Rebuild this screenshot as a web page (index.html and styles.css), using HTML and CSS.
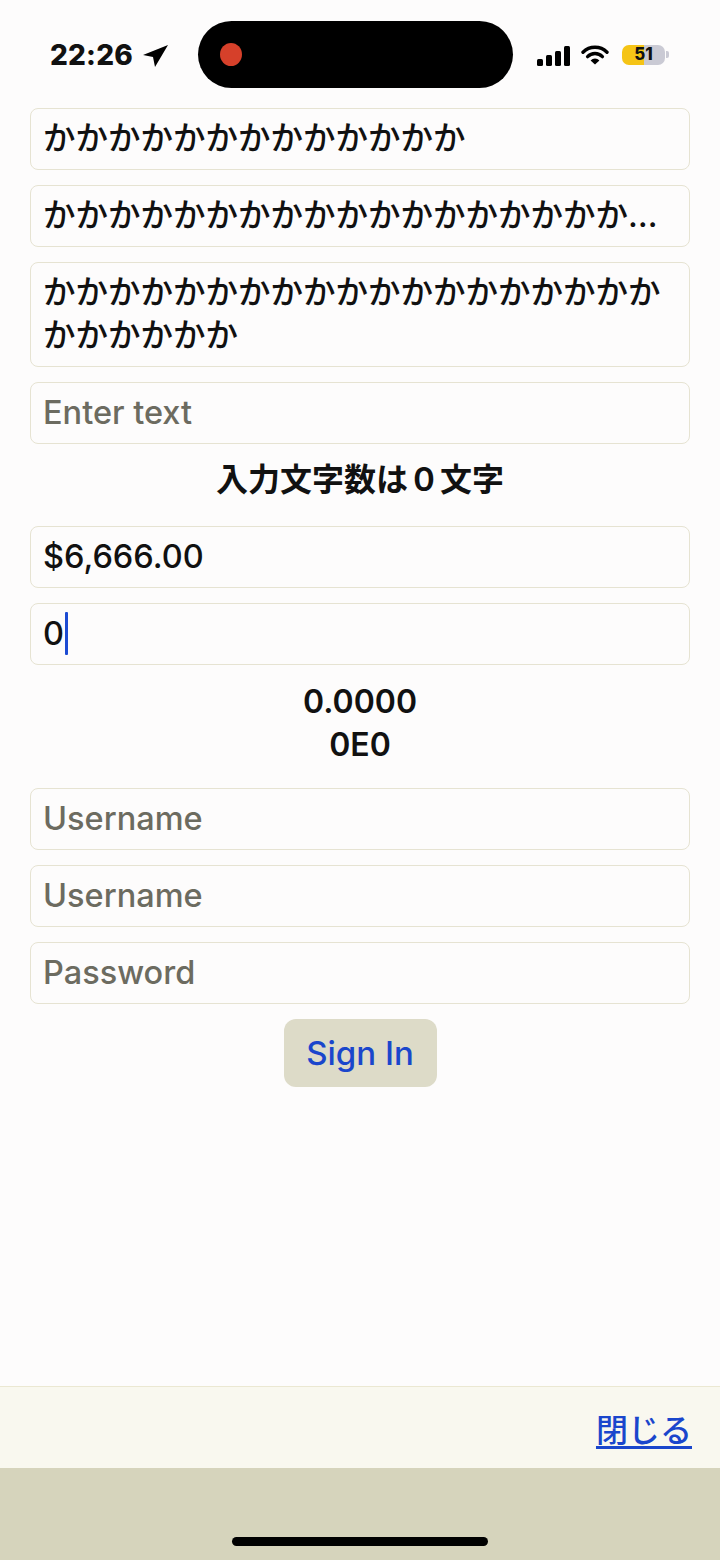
FILE: index.html
```html
<!DOCTYPE html>
<html lang="ja">
<head>
<meta charset="utf-8">
<title>Form</title>
<link rel="stylesheet" href="styles.css">
</head>
<body>
<div class="screen">
  <header class="status-bar">
    <div class="status-left">
      <span class="time">22:26</span>
      <svg class="loc" width="25" height="22" viewBox="0 0 25 22"><polygon points="25,0 0,10 10,12 12,22" fill="#000"/></svg>
    </div>
    <div class="island"><span class="rec-dot"></span></div>
    <div class="status-right">
      <div class="signal">
        <span class="bar b1"></span><span class="bar b2"></span><span class="bar b3"></span><span class="bar b4"></span>
      </div>
      <svg class="wifi" width="28" height="20" viewBox="0 0 28 20">
        <path d="M2 7.2 A17 17 0 0 1 26 7.2" fill="none" stroke="#000" stroke-width="3.4" stroke-linecap="round"/>
        <path d="M6.6 11.6 A10.5 10.5 0 0 1 21.4 11.6" fill="none" stroke="#000" stroke-width="3.4" stroke-linecap="round"/>
        <path d="M14 19.5 L9.6 15.4 A6.2 6.2 0 0 1 18.4 15.4 Z" fill="#000"/>
      </svg>
      <div class="battery">
        <div class="battery-body"><span class="battery-num">51</span></div>
        <span class="battery-nub"></span>
      </div>
    </div>
  </header>

  <main class="content">
    <div class="field">かかかかかかかかかかかかか</div>
    <div class="field single">かかかかかかかかかかかかかかかかかかかかかかかかか</div>
    <div class="field multi">かかかかかかかかかかかかかかかかかかかかかかかかか</div>
    <div class="field placeholder">Enter text</div>
    <div class="label count">入力文字数は０文字</div>
    <div class="field">$6,666.00</div>
    <div class="field"><span>0</span><span class="cursor"></span></div>
    <div class="label nums"><span>0.0000</span><span>0E0</span></div>
    <div class="field placeholder">Username</div>
    <div class="field placeholder">Username</div>
    <div class="field placeholder">Password</div>
    <div class="button-row"><button class="sign-in" type="button">Sign In</button></div>
  </main>

  <footer class="toolbar">
    <a class="close-link" href="#">閉じる</a>
  </footer>
  <div class="home-area"><span class="home-indicator"></span></div>
</div>
</body>
</html>
```

FILE: styles.css
```css
* { box-sizing: border-box; }

html, body {
  margin: 0;
  padding: 0;
}

body {
  background: #fdfcfc;
  font-family: "Inter", "Noto Sans CJK JP", sans-serif;
  color: #111;
}

.screen {
  width: 720px;
  height: 1560px;
  display: flex;
  flex-direction: column;
}

/* status bar */
.status-bar {
  height: 108px;
  padding: 21px 0 0 50px;
  display: flex;
  align-items: flex-start;
}

.status-left {
  height: 67px;
  width: 148px;
  display: flex;
  align-items: center;
  gap: 10px;
}

.time {
  font-family: "Inter", sans-serif;
  font-weight: 800;
  font-size: 28px;
  letter-spacing: 0.2px;
  line-height: 1;
}

.loc { margin-top: 2px; }

.island {
  width: 315px;
  height: 67px;
  background: #000;
  border-radius: 34px;
  display: flex;
  align-items: center;
  padding-left: 22px;
}

.rec-dot {
  width: 22px;
  height: 23px;
  border-radius: 50%;
  background: #d6402a;
}

.status-right {
  height: 67px;
  margin-left: 24px;
  display: flex;
  align-items: center;
  gap: 11px;
}

.signal {
  display: flex;
  align-items: flex-end;
  gap: 3px;
  height: 20px;
  margin-top: 2px;
}

.bar {
  width: 6px;
  background: #000;
  border-radius: 1.5px;
}
.b1 { height: 7px; }
.b2 { height: 11px; }
.b3 { height: 15px; }
.b4 { height: 20px; }

.wifi { margin-top: 1px; }

.battery {
  display: flex;
  align-items: center;
  gap: 1px;
  margin-left: 2px;
}

.battery-body {
  width: 43px;
  height: 20px;
  border-radius: 7px;
  background: linear-gradient(to right, #f5c416 0, #f5c416 52%, #cacad4 52%);
  display: flex;
  align-items: center;
  justify-content: center;
}

.battery-num {
  font-family: "Inter", sans-serif;
  font-weight: 800;
  font-size: 17px;
  line-height: 1;
  color: #111;
}

.battery-nub {
  width: 3px;
  height: 7px;
  border-radius: 0 2px 2px 0;
  background: #cacad4;
}

/* content */
.content {
  flex: 1;
  padding: 0 30px;
  display: flex;
  flex-direction: column;
  gap: 15px;
}

.field {
  border: 1px solid #e6e3d2;
  border-radius: 8px;
  padding: 8px 12px 9px;
  font-size: 32.5px;
  line-height: 43px;
  font-weight: 500;
  min-height: 62px;
  display: flex;
  align-items: center;
}

.field.single {
  display: block;
  white-space: nowrap;
  overflow: hidden;
  text-overflow: ellipsis;
}

.field.multi {
  display: block;
  word-break: break-all;
}

.field.placeholder {
  color: #6c6b60;
  font-weight: 500;
}

.cursor {
  display: inline-block;
  width: 3px;
  height: 43px;
  background: #1c4bd3;
  border-radius: 1px;
  margin-left: 1px;
}

.label {
  text-align: center;
  font-weight: 600;
  font-size: 32px;
  line-height: 43px;
}

.label.count {
  margin-top: -1px;
  margin-bottom: 10px;
}

.label.nums {
  display: flex;
  flex-direction: column;
  align-items: center;
  line-height: 43px;
  margin-bottom: 7px;
}

.button-row {
  display: flex;
  justify-content: center;
}

.sign-in {
  width: 153px;
  height: 68px;
  border: none;
  border-radius: 12px;
  background: #dddbc8;
  color: #1a46cc;
  font-family: "Inter", sans-serif;
  font-size: 33px;
  font-weight: 500;
  padding: 0;
}

/* toolbar */
.toolbar {
  height: 82px;
  border-top: 1px solid #ebe8d2;
  background: #f9f8ef;
  display: flex;
  align-items: center;
  justify-content: flex-end;
  padding-right: 28px;
}

.close-link {
  color: #1a46cc;
  font-size: 32px;
  font-weight: 500;
  text-decoration: underline;
  text-underline-offset: 4px;
}

.home-area {
  height: 92px;
  background: #d6d4bc;
  display: flex;
  justify-content: center;
  align-items: flex-end;
  padding-bottom: 14px;
}

.home-indicator {
  width: 256px;
  height: 9px;
  border-radius: 5px;
  background: #000;
}
```
